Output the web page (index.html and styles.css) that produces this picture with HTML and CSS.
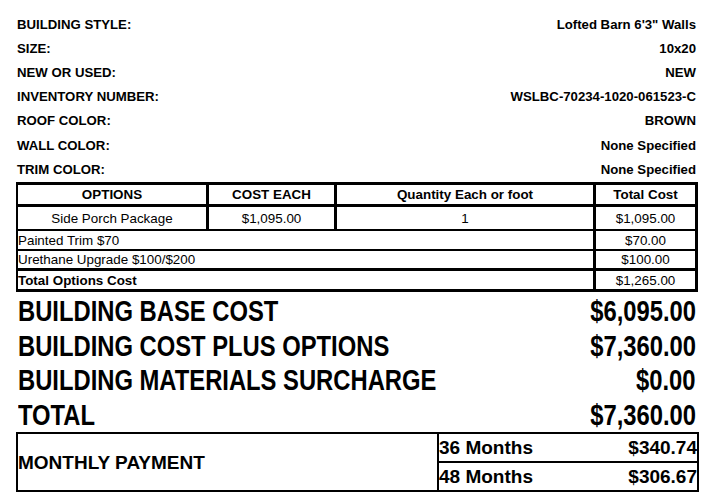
FILE: index.html
```html
<!DOCTYPE html>
<html>
<head>
<meta charset="utf-8">
<link rel="stylesheet" href="styles.css">
</head>
<body>
<div class="page">
  <div class="specs">
    <div class="spec-row"><span>BUILDING STYLE:</span><span>Lofted Barn 6'3" Walls</span></div>
    <div class="spec-row"><span>SIZE:</span><span>10x20</span></div>
    <div class="spec-row"><span>NEW OR USED:</span><span>NEW</span></div>
    <div class="spec-row"><span>INVENTORY NUMBER:</span><span>WSLBC-70234-1020-061523-C</span></div>
    <div class="spec-row"><span>ROOF COLOR:</span><span>BROWN</span></div>
    <div class="spec-row"><span>WALL COLOR:</span><span>None Specified</span></div>
    <div class="spec-row"><span>TRIM COLOR:</span><span>None Specified</span></div>
  </div>

  <div class="options">
    <div class="cell head">OPTIONS</div>
    <div class="cell head">COST EACH</div>
    <div class="cell head">Quantity Each or foot</div>
    <div class="cell head">Total Cost</div>

    <div class="cell r1">Side Porch Package</div>
    <div class="cell r1">$1,095.00</div>
    <div class="cell r1">1</div>
    <div class="cell r1">$1,095.00</div>

    <div class="cell r2 span left">Painted Trim $70</div>
    <div class="cell r2">$70.00</div>

    <div class="cell r3 span left">Urethane Upgrade $100/$200</div>
    <div class="cell r3">$100.00</div>

    <div class="cell r4 span left bold">Total Options Cost</div>
    <div class="cell r4">$1,265.00</div>
  </div>

  <div class="totals">
    <div class="total-row"><span class="t-label">BUILDING BASE COST</span><span class="t-value">$6,095.00</span></div>
    <div class="total-row"><span class="t-label">BUILDING COST PLUS OPTIONS</span><span class="t-value">$7,360.00</span></div>
    <div class="total-row"><span class="t-label">BUILDING MATERIALS SURCHARGE</span><span class="t-value">$0.00</span></div>
    <div class="total-row"><span class="t-label">TOTAL</span><span class="t-value">$7,360.00</span></div>
  </div>

  <div class="monthly">
    <div class="monthly-label">MONTHLY PAYMENT</div>
    <div class="monthly-terms">
      <div class="term"><span>36 Months</span><span>$340.74</span></div>
      <div class="term"><span>48 Months</span><span>$306.67</span></div>
    </div>
  </div>
</div>
</body>
</html>
```

FILE: styles.css
```css
* { box-sizing: border-box; }
html, body { margin: 0; padding: 0; background: #fff; }
body { font-family: "Liberation Sans", Arial, sans-serif; color: #000; }

.page {
  width: 683px;
  margin-left: 16px;
}

.specs {
  padding-top: 12px;
  padding-right: 3px;
  font-weight: bold;
  font-size: 13.2px;
}
.spec-row {
  display: flex;
  justify-content: space-between;
  align-items: center;
  height: 24.2px;
  padding-left: 1px;
}

.options {
  margin-top: 1px;
  width: 682px;
  display: grid;
  grid-template-columns: 191px 128px 259px 102px;
  grid-template-rows: 22px 24px 20px 20px 21px;
  border-top: 3px solid #000;
  border-left: 2px solid #000;
  font-size: 13.4px;
}
.cell {
  border-right: 3px solid #000;
  display: flex;
  align-items: center;
  justify-content: center;
  white-space: nowrap;
}
.cell.head { font-weight: bold; border-bottom: 3px solid #000; }
.cell.r1 { border-bottom: 2px solid #000; }
.cell.r2 { border-bottom: 2px solid #000; }
.cell.r3 { border-bottom: 3px solid #000; }
.cell.r4 { border-bottom: 3px solid #000; }
.cell.span { grid-column: span 3; }
.cell.left { justify-content: flex-start; padding-left: 0; }
.cell.bold { font-weight: bold; }

.totals {
  padding-top: 2px;
  font-weight: bold;
  font-size: 29px;
}
.total-row {
  display: flex;
  justify-content: space-between;
  align-items: center;
  height: 34.5px;
  padding: 0 3px 0 2px;
  white-space: nowrap;
}
.t-label {
  display: inline-block;
  transform: scaleX(0.82);
  transform-origin: left center;
}
.t-value {
  display: inline-block;
  transform: scaleX(0.82);
  transform-origin: right center;
}

.monthly {
  display: flex;
  border: 2px solid #000;
  height: 60px;
  font-weight: bold;
  font-size: 19px;
}
.monthly-label {
  width: 421px;
  border-right: 2px solid #000;
  display: flex;
  align-items: center;
  padding-top: 1px;
}
.monthly-terms {
  flex: 1;
  display: flex;
  flex-direction: column;
}
.term {
  flex: 1;
  display: flex;
  justify-content: space-between;
  align-items: center;
  padding-left: 0;
}
.term + .term { border-top: 2px solid #000; }
```
